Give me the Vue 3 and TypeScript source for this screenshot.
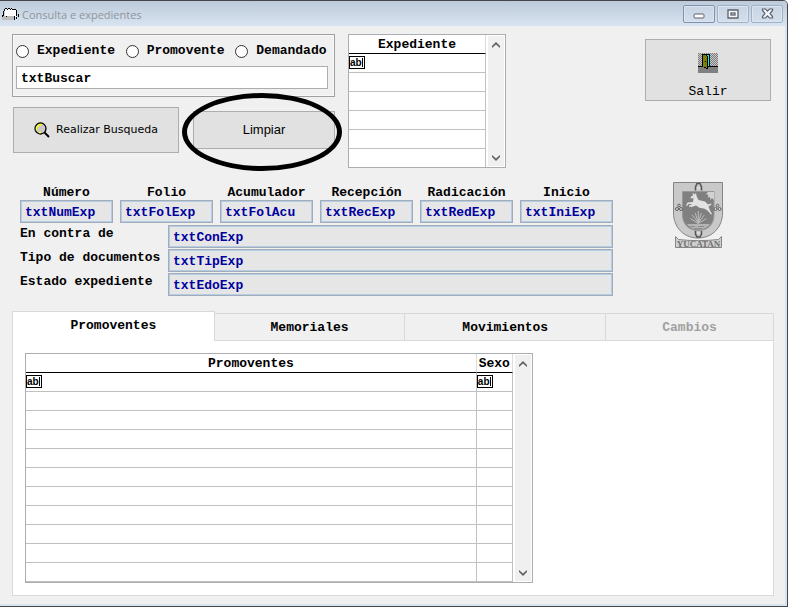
<script setup lang="ts">
import { ref } from 'vue'

interface Field {
  id: string
  label: string
  value: string
}

const searchModes: string[] = ['Expediente', 'Promovente', 'Demandado']
const mode = ref<string>('')
const search = ref<string>('txtBuscar')

const shortFields: Field[] = [
  { id: 'num', label: 'Número', value: 'txtNumExp' },
  { id: 'fol', label: 'Folio', value: 'txtFolExp' },
  { id: 'acu', label: 'Acumulador', value: 'txtFolAcu' },
  { id: 'rec', label: 'Recepción', value: 'txtRecExp' },
  { id: 'rad', label: 'Radicación', value: 'txtRedExp' },
  { id: 'ini', label: 'Inicio', value: 'txtIniExp' },
]

const longFields: Field[] = [
  { id: 'con', label: 'En contra de', value: 'txtConExp' },
  { id: 'tip', label: 'Tipo de documentos', value: 'txtTipExp' },
  { id: 'edo', label: 'Estado expediente', value: 'txtEdoExp' },
]

const tabs: string[] = ['Promoventes', 'Memoriales', 'Movimientos', 'Cambios']
const activeTab = ref<string>('Promoventes')
</script>

<template>
  <div class="desktop">
    <div class="window">
      <header class="titlebar">
        <svg class="app-icon" width="17" height="14" viewBox="0 0 17 14" shape-rendering="crispEdges" aria-hidden="true">
          <path d="M3 2h11v8H3z" fill="#fff" />
          <path d="M0 9h12v4H0z" fill="#bdbdbd" />
          <path d="M2 2h1v2H2zM1 4h1v5H1zM3 1h2v1H3zM6 1h2v1H6zM9 1h1v1H9zM5 2h1v1H5zM8 2h1v1H8zM10 2h4v1h-4zM14 3h1v6h-1zM16 7h1v3h-1zM0 8h1v2H0zM12 9h1v4h-1zM14 10h1v2h-1zM4 9h1v1H4z" fill="#000" />
        </svg>
        <h1 class="title">Consulta e expedientes</h1>
        <div class="window-buttons">
          <button type="button" class="win-btn" aria-label="Minimizar">
            <svg width="12" height="10" viewBox="0 0 12 10"><rect x="1" y="5" width="10" height="4" rx="1" fill="#fff" stroke="#5b616e" /></svg>
          </button>
          <button type="button" class="win-btn dim" aria-label="Maximizar">
            <svg width="12" height="10" viewBox="0 0 12 10"><path d="M1 1h10v8H1z" fill="#f4f6fa" stroke="#5b616e" stroke-width="1.300" /><rect x="4" y="4" width="4" height="2" fill="#fff" stroke="#5b616e" stroke-width="1.300" /></svg>
          </button>
          <button type="button" class="win-btn dim" aria-label="Cerrar">
            <svg width="13" height="11" viewBox="0 0 13 11"><path d="M1.500 1h3l2 2.200L8.500 1h3v1.500L9 5.500l2.500 3V10h-3l-2-2.200-2 2.200h-3V8.500l2.500-3-2.500-3z" fill="#f4f6fa" stroke="#5b616e" stroke-width="1.200" /></svg>
          </button>
        </div>
      </header>

      <main class="client">
        <section class="top">
          <div class="search">
            <div class="search-box">
              <div class="modes" role="radiogroup" aria-label="Buscar por">
                <label v-for="m in searchModes" :key="m" class="mode">
                  <input v-model="mode" type="radio" name="mode" :value="m" />{{ m }}
                </label>
              </div>
              <input v-model="search" class="search-input" type="text" aria-label="Buscar" />
            </div>
            <div class="actions">
              <button type="button" class="btn find">
                <svg width="16" height="16" viewBox="0 0 16 16" aria-hidden="true">
                  <circle cx="6.500" cy="6.500" r="5.500" fill="#c9c9c9" stroke="#000" stroke-width="1.300" />
                  <path d="M2.500 8.500V5.500L5.500 2.500H8M5 10.500h2" fill="none" stroke="#ffff00" stroke-width="1.300" />
                  <path d="M10.500 10.500l4.500 4.500" stroke="#000" stroke-width="2" />
                </svg>
                Realizar Busqueda
              </button>
              <div class="marked">
                <button type="button" class="btn clear">Limpiar</button>
                <span class="ring" aria-hidden="true"></span>
              </div>
            </div>
          </div>

          <div class="grid-box">
            <table class="grid">
              <thead>
                <tr><th scope="col">Expediente</th></tr>
              </thead>
              <tbody>
                <tr v-for="r in 6" :key="r">
                  <td><span v-if="r === 1" class="edit-mark">ab</span></td>
                </tr>
              </tbody>
            </table>
            <div class="scrollbar">
              <button type="button" aria-label="Subir"><svg width="8" height="6" viewBox="0 0 8 6"><path d="M0 4l4-4 4 4v2L4 2.500 0 6z" fill="#606060" /></svg></button>
              <button type="button" aria-label="Bajar"><svg width="8" height="6" viewBox="0 0 8 6"><path d="M0 2l4 4 4-4V0L4 3.500 0 0z" fill="#606060" /></svg></button>
            </div>
          </div>

          <button type="button" class="btn exit">
            <svg width="20" height="20" viewBox="0 0 20 20" shape-rendering="crispEdges" aria-hidden="true">
              <defs>
                <pattern id="dither" width="2" height="2" patternUnits="userSpaceOnUse">
                  <rect width="2" height="2" fill="#c8c8c8" />
                  <path d="M0 0h1v1H0zM1 1h1v1H1z" fill="#7c7c7c" />
                </pattern>
              </defs>
              <rect width="20" height="13" fill="url(#dither)" />
              <rect y="13" width="20" height="7" fill="#808080" />
              <rect y="13" width="20" height="1" fill="#000" />
              <rect x="4" y="1" width="8" height="13" fill="#000" />
              <rect x="8" y="2" width="3" height="11" fill="#00f0f0" />
              <path d="M5 2h3v1h1v12H8v-1H5z" fill="#808000" />
              <path d="M8 2h1v1H8zM9 3h1v13H8v-1h1zM5 14h3v1H6v-1zM7 8h1v1H7z" fill="#000" />
            </svg>
            Salir
          </button>
        </section>

        <section class="details">
          <div class="fields">
            <div class="short-fields">
              <div v-for="f in shortFields" :key="f.id" class="short">
                <label :for="f.id">{{ f.label }}</label>
                <input :id="f.id" class="field" type="text" readonly :value="f.value" />
              </div>
            </div>
            <div v-for="f in longFields" :key="f.id" class="long">
              <label :for="f.id">{{ f.label }}</label>
              <input :id="f.id" class="field" type="text" readonly :value="f.value" />
            </div>
          </div>

          <svg class="crest" width="52" height="68" viewBox="0 0 52 68" role="img" aria-label="Escudo de Yucatán">
            <path d="M1.500 1.500h49V32c0 14-10 25-24.500 25S1.500 46 1.500 32z" fill="#c9c9c9" stroke="#858585" />
            <path d="M10.500 10.500h31.500V34c0 9-6 15.500-15.700 15.500S10.500 43 10.500 34z" fill="#808080" stroke="#989898" />
            <path d="M15 43h23c-3 4-6.500 5.500-11.700 5.500S18 47 15 43z" fill="#b4b4b4" />
            <path d="M42 11v8l-2-2-1.500 2-.5-3-2.500.5 1-2.500-2.500-1 2-2z" fill="#d2d2d2" />
            <path d="M19 15.500l2-1L20.500 11.500l2 2 1.500-1.500.5 3 2 4 6.500 1.500 3 3 3-1 .5 1-3 2 1.500 4 2 3.500-1 .5-3.500-4-3.500-2-4-.5-4-2.500-4.500 1.500-2.500-.5v-1l3.500-1.500h-4l-1.500 2-1-.5 1.500-3 5.500-.5.500-4-3 .5z" fill="#e2e2e2" />
            <path d="M26.300 43V30M26.300 42l-3-10M26.300 42l3-10M26.300 42l-6-8M26.300 42l6-8M26.300 42.500l-8-5M26.300 42.500l8-5" stroke="#bdbdbd" fill="none" />
            <path d="M18 45.500h5M26 45.500h6M22 47.500h8" stroke="#8e8e8e" />
            <path d="M23.500 9.500V6l1.500-3.500h3L29.500 6v3.500M23.500 50v3l1.500 3h3l1.500-3v-3" fill="none" stroke="#555" stroke-width="1.500" />
            <path d="M25 7h3M25 52h3" stroke="#eee" />
            <g fill="#d8d8d8" stroke="#5c5c5c">
              <circle cx="7" cy="24.500" r="1.300" /><circle cx="5" cy="28" r="1.500" /><circle cx="9" cy="28" r="1.500" />
              <circle cx="45.500" cy="24.500" r="1.300" /><circle cx="43.500" cy="28" r="1.500" /><circle cx="47.500" cy="28" r="1.500" />
            </g>
            <path d="M3.500 55.500l3 3c12 1.500 27 1.500 40 0l3-3v11h-46z" fill="#d0d0d0" stroke="#858585" />
            <text x="26.500" y="66" text-anchor="middle" class="crest-text">YUCATAN</text>
          </svg>
        </section>

        <section class="tabs">
          <div class="tablist" role="tablist">
            <button
              v-for="t in tabs"
              :key="t"
              type="button"
              role="tab"
              class="tab"
              :class="[t.toLowerCase(), { active: t === activeTab }]"
              :aria-selected="t === activeTab"
              :disabled="t === 'Cambios'"
              @click="activeTab = t"
            >{{ t }}</button>
          </div>
          <div class="panel" role="tabpanel">
            <div class="grid-box people">
              <table class="grid">
                <thead>
                  <tr>
                    <th scope="col">Promoventes</th>
                    <th scope="col" class="sex">Sexo</th>
                  </tr>
                </thead>
                <tbody>
                  <tr v-for="r in 11" :key="r">
                    <td><span v-if="r === 1" class="edit-mark">ab</span></td>
                    <td><span v-if="r === 1" class="edit-mark">ab</span></td>
                  </tr>
                </tbody>
              </table>
              <div class="scrollbar">
                <button type="button" aria-label="Subir"><svg width="8" height="6" viewBox="0 0 8 6"><path d="M0 4l4-4 4 4v2L4 2.500 0 6z" fill="#606060" /></svg></button>
                <button type="button" aria-label="Bajar"><svg width="8" height="6" viewBox="0 0 8 6"><path d="M0 2l4 4 4-4V0L4 3.500 0 0z" fill="#606060" /></svg></button>
              </div>
            </div>
          </div>
        </section>
      </main>
    </div>
  </div>
</template>

<style>
body {
  background: #fff;
}
</style>

<style scoped>
.desktop,
.desktop * {
  box-sizing: border-box;
}
.desktop {
  padding: 0 5px 3px 0;
  color: #000;
  font: bold 13px/16px 'Liberation Mono', monospace;
}
button,
input {
  font: inherit;
  color: inherit;
  margin: 0;
}
button {
  padding: 0;
}
svg {
  display: block;
  flex: none;
}
.window {
  background: #f0f0f0;
  border: solid #45474c;
  border-width: 1px 1px 1px 0;
  border-radius: 0 5px 0 0;
  box-shadow: inset -2px -2px #d9e4f1;
}
.titlebar {
  display: flex;
  align-items: center;
  height: 25px;
  padding: 0 4px 0 2px;
  border-radius: 0 4px 0 0;
  background: linear-gradient(#bdcad9, #d8e4f1);
}
.title {
  flex: 1;
  margin: 0 0 0 3px;
  padding-top: 2px;
  color: #8e959e;
  font: 11px/16px 'Open Sans', sans-serif;
}
.window-buttons {
  display: flex;
  gap: 2px;
}
.win-btn {
  display: grid;
  place-items: center;
  width: 32px;
  height: 18px;
  border: 1px solid #8090ad;
  border-radius: 2px;
  background: linear-gradient(#c8d4e3, #d4dfec);
  box-shadow: inset 0 0 0 1px #dce6f1;
}
.win-btn.dim {
  border-color: #a3b1c5;
}
.client {
  padding: 8px 13px 10px 12px;
}
.top {
  display: grid;
  grid-template-columns: 323fr 158fr 255fr;
  column-gap: 13px;
  align-items: start;
}
.search-box {
  height: 63px;
  padding: 9px 6px 7px 3px;
  border: 1px solid #a0a0a0;
  box-shadow: inset 0 0 0 1px #f8f8f8;
}
.modes {
  display: grid;
  grid-template-columns: 110fr 110fr 93fr;
}
.mode {
  display: flex;
  align-items: center;
  gap: 8px;
  height: 14px;
}
.mode input {
  appearance: none;
  flex: none;
  width: 13px;
  height: 13px;
  border: 1px solid #333;
  border-radius: 50%;
  background: #fff;
}
.mode input:checked {
  box-shadow: inset 0 0 0 3px #fff;
  background: #222;
}
.search-input {
  display: block;
  width: 100%;
  height: 23px;
  margin-top: 8px;
  padding: 1px 4px 0;
  border: 1px solid #abadb3;
  border-radius: 0;
  background: #fff;
}
.actions {
  display: grid;
  grid-template-columns: 166fr 142fr;
  column-gap: 14px;
  align-items: center;
  padding: 10px 0 0 1px;
}
.btn {
  border: 1px solid #adadad;
  background: #e1e1e1;
}
.find {
  display: flex;
  align-items: center;
  justify-content: center;
  gap: 6px;
  height: 46px;
  font: 11px/16px 'DejaVu Sans', sans-serif;
}
.marked {
  position: relative;
}
.clear {
  display: block;
  width: 100%;
  height: 38px;
  font: 13px/16px 'Liberation Sans', sans-serif;
}
.ring {
  position: absolute;
  inset: -18px -7px -22px -11px;
  border: 5px solid #000;
  border-radius: 50%;
  pointer-events: none;
}
.exit {
  display: flex;
  flex-direction: column;
  align-items: center;
  justify-self: end;
  gap: 11px;
  width: 126px;
  height: 62px;
  margin: 5px 3px 0 0;
  padding-top: 13px;
  font-weight: normal;
}
.grid-box {
  display: flex;
  border: 1px solid #abadb3;
  background: #fff;
}
.grid {
  flex: 1;
  border-collapse: separate;
  border-spacing: 0;
  table-layout: fixed;
}
.grid th {
  height: 19px;
  padding: 1px 0 0;
  border-bottom: 1px solid #000;
  border-right: 1px solid #dcdcdc;
  font-weight: bold;
  line-height: 16px;
}
.grid td {
  height: 19px;
  padding: 0;
  border-bottom: 1px solid #c0c0c0;
  border-right: 1px solid #c0c0c0;
  vertical-align: top;
}
.grid tbody tr:last-child td {
  height: 18px;
  border-bottom: 0;
}
.people .grid tbody tr:last-child td {
  height: 19px;
  border-bottom: 1px solid #c0c0c0;
}
.sex {
  width: 36px;
}
.edit-mark {
  display: flex;
  width: 16px;
  height: 13px;
  margin-top: 2px;
  padding: 1px 1px 1px 0;
  border: 1px solid #000;
  font: bold 10px/9px 'Liberation Sans', sans-serif;
}
.edit-mark::after {
  content: '';
  width: 1px;
  margin-left: auto;
  background: #000;
}
.scrollbar {
  display: flex;
  flex-direction: column;
  justify-content: space-between;
  flex: none;
  width: 19px;
  border: solid #fff;
  border-width: 1px 1px 1px 2px;
  background: #f0f0f0;
}
.scrollbar button {
  display: grid;
  place-items: center;
  height: 17px;
  border: 0;
  background: none;
}
.details {
  display: flex;
  align-items: flex-start;
  justify-content: space-between;
  margin-top: 13px;
  padding: 0 50px 0 8px;
}
.fields {
  flex: 0 1 593px;
  display: grid;
  row-gap: 1px;
}
.short-fields {
  display: grid;
  grid-template-columns: repeat(6, 1fr);
  column-gap: 7px;
  margin-bottom: 1px;
}
.short {
  display: flex;
  flex-direction: column;
  padding-top: 4px;
  line-height: 15px;
  text-align: center;
}
.field {
  width: 100%;
  height: 23px;
  padding: 1px 4px 0;
  border: 1px solid #a5acb5;
  border-radius: 0;
  background: #e6e6e6;
  box-shadow: inset 0 0 0 1px #b0cdea;
  color: #0000a0;
}
.long {
  display: grid;
  grid-template-columns: 148px 1fr;
}
.long label {
  padding-top: 1px;
}
.crest-text {
  font: bold 9px 'Liberation Serif', serif;
  fill: #707070;
}
.tabs {
  margin-top: 15px;
}
.tablist {
  display: flex;
  align-items: flex-end;
}
.tab {
  flex: 191 1 0;
  height: 27px;
  padding-top: 1px;
  border: 1px solid #d9d9d9;
  border-width: 1px 1px 0 0;
  background: #f0f0f0;
}
.tab.promoventes {
  flex-grow: 202;
}
.tab.movimientos {
  flex-grow: 201;
}
.tab.cambios {
  flex-grow: 168;
}
.tab.active {
  position: relative;
  height: 30px;
  margin-bottom: -1px;
  padding-bottom: 3px;
  border-left-width: 1px;
  background: #fff;
}
.tab:disabled {
  color: #a0a0a0;
}
.panel {
  padding: 12px;
  border: 1px solid #d9d9d9;
  background: #fff;
}
.people {
  width: 69%;
}
</style>
